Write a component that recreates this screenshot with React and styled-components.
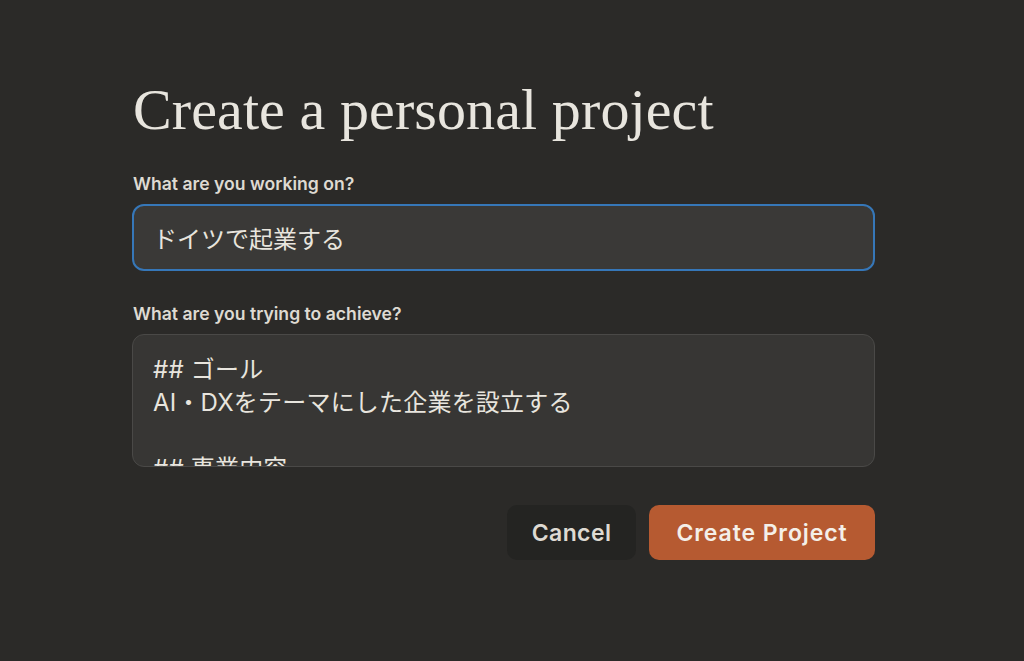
import styled, { createGlobalStyle } from "styled-components";

const GlobalStyle = createGlobalStyle`
  html, body {
    margin: 0;
    padding: 0;
    background: #2b2a28;
  }
  body {
    font-family: "Inter", "Noto Sans CJK JP", sans-serif;
  }
`;

const Page = styled.div`
  width: 1024px;
  height: 661px;
  background: #2b2a28;
  box-sizing: border-box;
  padding: 78px 149px 0 132px;
`;

const Form = styled.div`
  display: flex;
  flex-direction: column;
`;

const Title = styled.h1`
  margin: 0 0 0 1px;
  font-family: "Liberation Serif", "DejaVu Serif", serif;
  font-weight: 400;
  font-size: 58px;
  line-height: 64px;
  color: #e8e5de;
  letter-spacing: 0.1px;
`;

const Label = styled.label`
  display: block;
  margin: ${({ $top }) => $top}px 0 9px 1px;
  font-family: "Inter", sans-serif;
  font-weight: 600;
  font-size: 17.6px;
  line-height: 22px;
  color: #dedad2;
`;

const Input = styled.div`
  height: 67px;
  box-sizing: border-box;
  border: 2px solid #3677b8;
  border-radius: 12px;
  background: #3a3937;
  padding: 0 19px;
  display: flex;
  align-items: center;
  font-family: "Noto Sans CJK JP", sans-serif;
  font-size: 24px;
  color: #e8e5de;
`;

const TextArea = styled.div`
  height: 133px;
  box-sizing: border-box;
  border: 1px solid #4a4947;
  border-radius: 12px;
  background: #373634;
  padding: 18px 20px 0;
  overflow: hidden;
  font-family: "Inter", "Noto Sans CJK JP", sans-serif;
  font-size: 24px;
  line-height: 33px;
  letter-spacing: 0.2px;
  color: #e8e5de;
  white-space: pre;
`;

const Actions = styled.div`
  display: flex;
  justify-content: flex-end;
  gap: 13px;
  margin-top: 38px;
`;

const Button = styled.button`
  height: 55px;
  padding: 0;
  border: none;
  border-radius: 10px;
  font-family: "Inter", sans-serif;
  font-weight: 600;
  font-size: 23px;
  letter-spacing: ${({ $primary }) => ($primary ? "0.9px" : "0.4px")};
  cursor: pointer;
  background: ${({ $primary }) => ($primary ? "#b65a31" : "#242422")};
  color: ${({ $primary }) => ($primary ? "#f4efe8" : "#dedad2")};
  width: ${({ $w }) => $w}px;
`;

export default function App() {
  return (
    <>
      <GlobalStyle />
      <Page>
        <Form>
          <Title>Create a personal project</Title>
          <Label $top={31}>What are you working on?</Label>
          <Input>ドイツで起業する</Input>
          <Label $top={32}>What are you trying to achieve?</Label>
          <TextArea>{"## ゴール\nAI・DXをテーマにした企業を設立する\n\n## 事業内容"}</TextArea>
          <Actions>
            <Button $w={129}>Cancel</Button>
            <Button $primary $w={226}>Create Project</Button>
          </Actions>
        </Form>
      </Page>
    </>
  );
}
